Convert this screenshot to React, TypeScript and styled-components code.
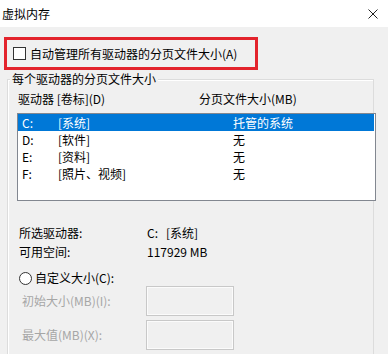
import styled, { createGlobalStyle } from 'styled-components'

const GlobalStyle = createGlobalStyle`
  html, body {
    margin: 0;
    padding: 0;
    height: 354px;
    overflow: hidden;
    background: #f0f0f0;
  }
  body {
    font-family: "Noto Sans CJK SC", "Noto Sans", sans-serif;
    font-size: 12px;
    color: #000;
  }
`

const Dialog = styled.div`
  width: 388px;
  height: 354px;
  display: flex;
  flex-direction: column;
  background: #f0f0f0;
`

const TitleBar = styled.div`
  height: 27px;
  flex: none;
  display: flex;
  align-items: center;
  justify-content: space-between;
  padding: 0 10px 0 2px;
  background: #fff;
  line-height: 16px;
`

const Main = styled.div`
  flex: 1;
  min-height: 0;
  display: flex;
  flex-direction: column;
  padding-top: 10px;
`

const Highlight = styled.div`
  box-sizing: border-box;
  width: 254px;
  height: 33px;
  flex: none;
  margin-left: 4px;
  border: 3px solid #e3232c;
  display: flex;
  align-items: center;
  gap: 4px;
  padding-left: 6px;
  line-height: 16px;
`

const CheckBox = styled.span`
  box-sizing: border-box;
  width: 13px;
  height: 13px;
  border: 1px solid #333;
  background: #fff;
  flex: none;
`

const GroupBox = styled.div`
  box-sizing: border-box;
  flex: 1;
  min-height: 0;
  margin: 9px 0 0 7px;
  width: 367px;
  border: 1px solid #dcdcdc;
  border-bottom: none;
  box-shadow: inset 1px 1px 0 #fff;
  display: flex;
  flex-direction: column;
`

const GroupTitle = styled.div`
  margin: -9px 0 0 2px;
  padding: 0 2px;
  width: fit-content;
  background: #f0f0f0;
  line-height: 16px;
`

const HeaderRow = styled.div`
  margin-top: 4px;
  padding-left: 10px;
  display: grid;
  grid-template-columns: 181px 1fr;
  line-height: 16px;
`

const ListBox = styled.div`
  box-sizing: border-box;
  margin: 6px 0 0 9px;
  width: 359px;
  height: 88px;
  flex: none;
  border: 1px solid #828790;
  background: #fff;
`

const DriveRow = styled.div<{ $selected?: boolean }>`
  height: 17px;
  line-height: 17px;
  margin-right: 1px;
  padding-left: 4px;
  display: grid;
  grid-template-columns: 36px 175px 1fr;
  background: ${(p) => (p.$selected ? '#0078d7' : 'transparent')};
  color: ${(p) => (p.$selected ? '#fff' : '#000')};
`

const InfoBlock = styled.div`
  margin-top: 22px;
  display: flex;
  flex-direction: column;
`

const InfoRow = styled.div`
  height: 19px;
  line-height: 19px;
  padding-left: 11px;
  display: grid;
  grid-template-columns: 128px 1fr;
`

const RadioRow = styled.label`
  margin-top: 8px;
  height: 18px;
  line-height: 18px;
  padding-left: 11px;
  display: flex;
  align-items: center;
  gap: 3px;
`

const Radio = styled.span`
  box-sizing: border-box;
  width: 13px;
  height: 13px;
  border: 1px solid #333;
  border-radius: 50%;
  background: #fff;
  flex: none;
`

const SizeFields = styled.div`
  margin-top: -1px;
  display: flex;
  flex-direction: column;
  gap: 4px;
`

const SizeRow = styled.div`
  padding-left: 14px;
  display: grid;
  grid-template-columns: 124px 88px;
  align-items: center;
  color: #a6a6a6;
  line-height: 16px;
`

const SizeInput = styled.div`
  box-sizing: border-box;
  height: 30px;
  border: 1px solid #c8c8c8;
  box-shadow: inset 0 0 0 1px #fbfbfb;
  background: #f0f0f0;
`

const drives = [
  { letter: 'C:', label: '[系统]', size: '托管的系统', selected: true },
  { letter: 'D:', label: '[软件]', size: '无' },
  { letter: 'E:', label: '[资料]', size: '无' },
  { letter: 'F:', label: '[照片、视频]', size: '无' },
]

export default function App() {
  return (
    <Dialog>
      <GlobalStyle />
      <TitleBar>
        <span>虚拟内存</span>
        <svg width="10" height="10" viewBox="0 0 10 10">
          <path d="M0.5 0.5 L9.5 9.5 M9.5 0.5 L0.5 9.5" stroke="#222" strokeWidth="1" fill="none" />
        </svg>
      </TitleBar>
      <Main>
        <Highlight>
          <CheckBox />
          <span>自动管理所有驱动器的分页文件大小(A)</span>
        </Highlight>
        <GroupBox>
          <GroupTitle>每个驱动器的分页文件大小</GroupTitle>
          <HeaderRow>
            <span>驱动器 [卷标](D)</span>
            <span>分页文件大小(MB)</span>
          </HeaderRow>
          <ListBox>
            {drives.map((d) => (
              <DriveRow key={d.letter} $selected={d.selected}>
                <span>{d.letter}</span>
                <span>{d.label}</span>
                <span>{d.size}</span>
              </DriveRow>
            ))}
          </ListBox>
          <InfoBlock>
            <InfoRow>
              <span>所选驱动器:</span>
              <span>C:&nbsp;&nbsp;&nbsp;[系统]</span>
            </InfoRow>
            <InfoRow>
              <span>可用空间:</span>
              <span>117929 MB</span>
            </InfoRow>
          </InfoBlock>
          <RadioRow>
            <Radio />
            <span>自定义大小(C):</span>
          </RadioRow>
          <SizeFields>
            <SizeRow>
              <span>初始大小(MB)(I):</span>
              <SizeInput />
            </SizeRow>
            <SizeRow>
              <span>最大值(MB)(X):</span>
              <SizeInput />
            </SizeRow>
          </SizeFields>
        </GroupBox>
      </Main>
    </Dialog>
  )
}
